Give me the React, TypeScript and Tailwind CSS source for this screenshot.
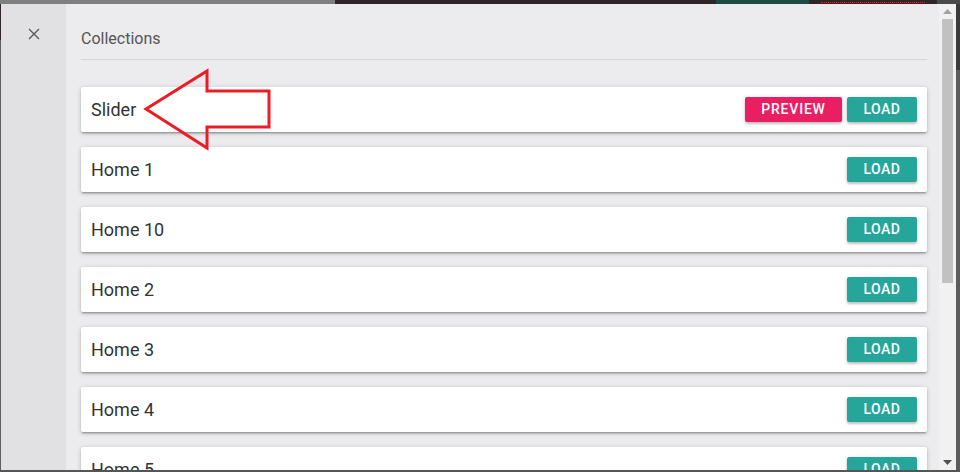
import React from "react";

const items = [
  { name: "Slider", preview: true },
  { name: "Home 1" },
  { name: "Home 10" },
  { name: "Home 2" },
  { name: "Home 3" },
  { name: "Home 4" },
  { name: "Home 5" },
];

function Arrow() {
  return (
    <svg
      className="absolute left-[140px] top-[64px]"
      width="140"
      height="92"
      viewBox="140 64 140 92"
    >
      <polygon
        points="146,109 207,71 207,91 269,91 269,127 207,127 207,148"
        fill="none"
        stroke="#ed1c24"
        strokeWidth="3"
        strokeLinejoin="miter"
      />
    </svg>
  );
}

export default function App() {
  return (
    <div
      className="relative w-[960px] h-[472px] flex flex-col overflow-hidden bg-[#2e2529]"
      style={{ fontFamily: "Roboto, 'Noto Sans', sans-serif" }}
    >
      {/* page behind the modal */}
      <div className="h-[4px] flex shrink-0">
        <div className="w-[335px] bg-[#7f7f7f]" />
        <div className="w-[381px] bg-[#2e2529]" />
        <div className="w-[93px] bg-[#1d4a43]" />
        <div className="w-[128px] bg-[#2e2529] flex items-center pl-[12px]">
          <div className="w-[104px] border-t border-dotted border-[#e02020]" />
        </div>
        <div className="flex-1 bg-[#4a4a4a]" />
      </div>

      <div className="flex flex-1 min-h-0">
        <div className="w-[1px] flex flex-col">
          <div className="h-[36px] bg-[#2e2529]" />
          <div className="flex-1 bg-[#5e5e5e]" />
        </div>

        {/* side rail */}
        <div className="w-[65px] bg-[#e1e1e3] flex justify-center pt-[24px]">
          <svg width="12" height="12" viewBox="0 0 12 12">
            <path d="M1 1L11 11M11 1L1 11" stroke="#555" strokeWidth="1.3" />
          </svg>
        </div>

        {/* main content */}
        <div className="w-[873px] bg-[#ececee] pl-[15px] pr-[12px] overflow-hidden">
          <div className="pt-[25px] pb-[10px] border-b border-[#d6d6d8] text-[16px] leading-[20px] text-[#555]">
            Collections
          </div>
          <div className="flex flex-col gap-[15px] pt-[27px]">
            {items.map((item) => (
              <div
                key={item.name}
                className="h-[45px] shrink-0 bg-white rounded-[2px] flex items-center justify-between pl-[10px] pr-[10px] shadow-[0_2px_2px_rgba(0,0,0,0.14),0_3px_1px_-2px_rgba(0,0,0,0.12),0_1px_5px_rgba(0,0,0,0.2)]"
              >
                <span className="text-[18px] text-[#333]">{item.name}</span>
                <div className="flex gap-[5px]">
                  {item.preview && (
                    <button className="w-[97px] h-[25px] rounded-[2px] bg-[#e91e63] text-white text-[14px] font-medium tracking-[0.8px] shadow-[0_2px_2px_rgba(0,0,0,0.14),0_1px_4px_rgba(0,0,0,0.18)]">
                      PREVIEW
                    </button>
                  )}
                  <button className="w-[70px] h-[25px] rounded-[2px] bg-[#26a69a] text-white text-[14px] font-medium tracking-[0.5px] shadow-[0_2px_2px_rgba(0,0,0,0.14),0_1px_4px_rgba(0,0,0,0.18)]">
                    LOAD
                  </button>
                </div>
              </div>
            ))}
          </div>
        </div>

        {/* scrollbar */}
        <div className="w-[17px] bg-[#f1f1f1] flex flex-col items-center">
          <div className="h-[15px] flex items-center justify-center">
            <svg width="9" height="5" viewBox="0 0 9 5">
              <polygon points="0,5 4.5,0 9,5" fill="#a3a3a3" />
            </svg>
          </div>
          <div className="w-[11px] h-[264px] bg-[#c1c1c1]" />
          <div className="flex-1" />
          <div className="h-[15px] flex items-center justify-center">
            <svg width="9" height="5" viewBox="0 0 9 5">
              <polygon points="0,0 9,0 4.5,5" fill="#505050" />
            </svg>
          </div>
        </div>

        <div className="flex-1 flex flex-col">
          <div className="h-[66px] bg-[#3a3a3a]" />
          <div className="flex-1 bg-[#5c5c5c]" />
        </div>
      </div>

      <div className="h-[2px] shrink-0 bg-[#555]" />

      <Arrow />
    </div>
  );
}
